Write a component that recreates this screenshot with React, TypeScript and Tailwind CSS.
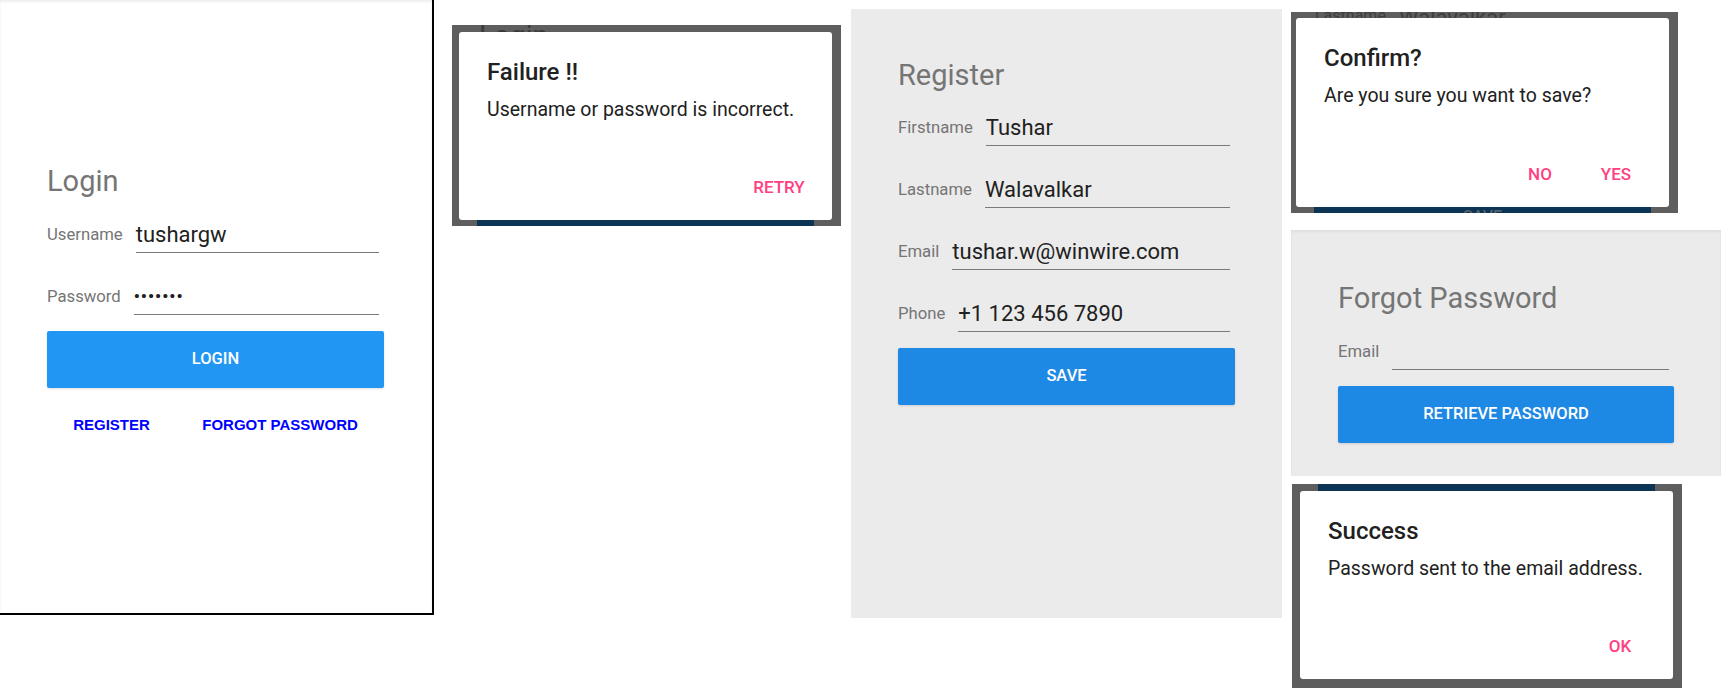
import React from 'react'

const Field = ({ label, value, mt }: { label: string; value?: React.ReactNode; mt: string }) => (
  <div className={`flex items-center gap-[13px] h-[36px] ${mt}`}>
    <span className="text-[16.7px] text-[#757575] whitespace-nowrap">{label}</span>
    <div className="flex-1 h-full flex items-center mr-[5px] border-b-[1.5px] border-[#7a7a7a] text-[22px] text-[#212121] whitespace-nowrap">
      {value}
    </div>
  </div>
)

const DialogBtn = ({ children }: { children: React.ReactNode }) => (
  <div className="min-w-[64px] h-[36px] flex items-center justify-center text-[17px] font-medium text-[#ff4081]">
    {children}
  </div>
)

const Dialog = ({
  box,
  card,
  title,
  message,
  buttons,
  underlay,
}: {
  box: string
  card: string
  title: string
  message: string
  buttons: string[]
  underlay?: React.ReactNode
}) => (
  <div className={`relative overflow-hidden bg-[#5e5e5e] shrink-0 ${box}`}>
    {underlay}
    {/* dialog card over the dimmed screen */}
    <div className={`absolute w-[373px] bg-white rounded-[3px] flex flex-col ${card}`}>
      <div className="px-[28px] pt-[26px]">
        <h2 className="text-[24px] leading-[28px] font-medium text-[#212121]">{title}</h2>
        <p className="mt-[12px] text-[19.5px] leading-[24px] text-[#212121] whitespace-nowrap">{message}</p>
      </div>
      <div className="mt-auto flex justify-end gap-[12px] pr-[21px] pb-[14px]">
        {buttons.map((b) => (
          <DialogBtn key={b}>{b}</DialogBtn>
        ))}
      </div>
    </div>
  </div>
)

const App = () => {
  return (
    <div className="flex items-start w-[1727px] h-[692px] overflow-hidden bg-white font-['Roboto',sans-serif]">
      {/* Login screen */}
      <div className="w-[434px] h-[615px] shrink-0 bg-white border-r-2 border-b-2 border-black shadow-[inset_0_2px_3px_rgba(0,0,0,0.07)] flex flex-col pl-[47px] pr-[48px] pt-[164px]">
        <h1 className="text-[29px] leading-[34px] text-[#757575]">Login</h1>
        <Field label="Username" value="tushargw" mt="mt-[19px]" />
        <Field
          label="Password"
          value={<span className="text-[17px] tracking-[1px] font-bold">•••••••</span>}
          mt="mt-[26px]"
        />
        <button className="mt-[16px] h-[57px] rounded-[2px] bg-[#2196f3] text-white text-[16.5px] font-medium shadow-sm">
          LOGIN
        </button>
        <div className="mt-[26px] flex justify-around text-[15px] font-bold text-[#0000ff] font-['Liberation_Sans',sans-serif]">
          <span>REGISTER</span>
          <span>FORGOT PASSWORD</span>
        </div>
      </div>

      {/* Failure dialog */}
      <div className="ml-[18px] mt-[25px]">
        <Dialog
          box="w-[389px] h-[201px]"
          card="left-[7px] top-[7px] h-[188px]"
          title="Failure !!"
          message="Username or password is incorrect."
          buttons={['RETRY']}
          underlay={
            <>
              <span aria-hidden className="absolute left-[27px] top-[-3px] text-[28px] leading-[28px] text-[#3a3a3a]">Login</span>
              <div className="absolute left-[25px] top-[195px] w-[337px] h-[6px] bg-[#0c3454]" />
            </>
          }
        />
      </div>

      {/* Register screen */}
      <div className="ml-[10px] mt-[9px] w-[431px] h-[609px] shrink-0 bg-[#ebebeb] flex flex-col px-[47px] pt-[49px]">
        <h1 className="text-[29px] leading-[34px] text-[#757575]">Register</h1>
        <Field label="Firstname" value="Tushar" mt="mt-[18px]" />
        <Field label="Lastname" value="Walavalkar" mt="mt-[26px]" />
        <Field label="Email" value="tushar.w@winwire.com" mt="mt-[26px]" />
        <Field label="Phone" value="+1 123 456 7890" mt="mt-[26px]" />
        <button className="mt-[16px] h-[57px] rounded-[2px] bg-[#1e88e5] text-white text-[16.5px] font-medium shadow-sm">
          SAVE
        </button>
      </div>

      {/* Right column */}
      <div className="ml-[9px] flex flex-col items-start">
        <div className="mt-[12px]">
          <Dialog
            box="w-[387px] h-[201px]"
            card="left-[5px] top-[6px] h-[189px]"
            title="Confirm?"
            message="Are you sure you want to save?"
            buttons={['NO', 'YES']}
            underlay={
              <>
                <span aria-hidden className="absolute left-[24px] top-[-6px] text-[16px] leading-[20px] text-[#3e3e3e]">Lastname</span>
                <span aria-hidden className="absolute left-[108px] top-[-7px] text-[22px] leading-[26px] text-[#3e3e3e]">Walavalkar</span>
                <div className="absolute left-[23px] top-[195px] w-[337px] h-[6px] bg-[#0c3454]" />
                <span aria-hidden className="absolute left-[172px] top-[196px] text-[16px] leading-[18px] font-medium text-[#56616c]">SAVE</span>
              </>
            }
          />
        </div>

        {/* Forgot password screen */}
        <div className="mt-[17px] w-[430px] h-[246px] bg-[#ebebeb] shadow-[inset_0_2px_3px_rgba(0,0,0,0.05)] flex flex-col px-[47px] pt-[51px]">
          <h1 className="text-[29px] leading-[34px] text-[#757575]">Forgot Password</h1>
          <Field label="Email" mt="mt-[19px]" />
          <button className="mt-[16px] h-[57px] rounded-[2px] bg-[#1e88e5] text-white text-[16.5px] font-medium shadow-sm">
            RETRIEVE PASSWORD
          </button>
        </div>

        <div className="mt-[8px] ml-[1px]">
          <Dialog
            box="w-[390px] h-[204px]"
            card="left-[8px] top-[7px] h-[188px]"
            title="Success"
            message="Password sent to the email address."
            buttons={['OK']}
            underlay={<div className="absolute left-[26px] top-0 w-[337px] h-[7px] bg-[#0c3454]" />}
          />
        </div>
      </div>
    </div>
  )
}

export default App
